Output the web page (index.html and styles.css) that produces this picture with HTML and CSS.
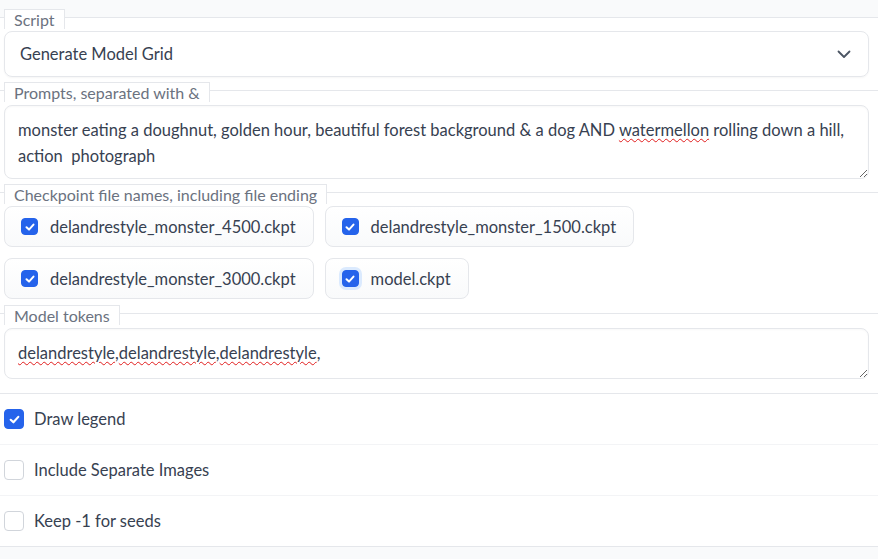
FILE: index.html
```html
<!DOCTYPE html>
<html lang="en">
<head>
  <meta charset="UTF-8">
  <meta name="viewport" content="width=device-width, initial-scale=1.0">
  <title>Generate Model Grid</title>
  <link rel="stylesheet" href="styles.css">
</head>
<body>
  <div class="top-gap"></div>

  <div class="panel">
    <div class="block">
      <span class="block-label">Script</span>
      <div class="select">
        <span>Generate Model Grid</span>
        <svg class="chevron" width="14" height="9" viewBox="0 0 14 9"><path d="M1.5 1.5 L7 7 L12.5 1.5" fill="none" stroke="#4b5563" stroke-width="1.8" stroke-linecap="round" stroke-linejoin="round"/></svg>
      </div>
    </div>

    <div class="block">
      <span class="block-label">Prompts, separated with &amp;</span>
      <div class="textbox textbox-tall">monster eating a doughnut, golden hour, beautiful forest background &amp; a dog AND <span class="typo">watermellon</span> rolling down a hill, action&nbsp; photograph</div>
    </div>

    <div class="block block-roomy">
      <span class="block-label">Checkpoint file names, including file ending</span>
      <div class="pill-list">
        <label class="pill"><span class="box checked"><svg width="12" height="12" viewBox="0 0 12 12"><path d="M2.5 6.3 L5 8.6 L9.5 3.6" fill="none" stroke="#fff" stroke-width="2" stroke-linecap="round" stroke-linejoin="round"/></svg></span>delandrestyle_monster_4500.ckpt</label>
        <label class="pill"><span class="box checked"><svg width="12" height="12" viewBox="0 0 12 12"><path d="M2.5 6.3 L5 8.6 L9.5 3.6" fill="none" stroke="#fff" stroke-width="2" stroke-linecap="round" stroke-linejoin="round"/></svg></span>delandrestyle_monster_1500.ckpt</label>
        <label class="pill"><span class="box checked"><svg width="12" height="12" viewBox="0 0 12 12"><path d="M2.5 6.3 L5 8.6 L9.5 3.6" fill="none" stroke="#fff" stroke-width="2" stroke-linecap="round" stroke-linejoin="round"/></svg></span>delandrestyle_monster_3000.ckpt</label>
        <label class="pill"><span class="box checked focused"><svg width="12" height="12" viewBox="0 0 12 12"><path d="M2.5 6.3 L5 8.6 L9.5 3.6" fill="none" stroke="#fff" stroke-width="2" stroke-linecap="round" stroke-linejoin="round"/></svg></span>model.ckpt</label>
      </div>
    </div>

    <div class="block block-roomy">
      <span class="block-label">Model tokens</span>
      <div class="textbox textbox-short"><span class="typo">delandrestyle</span>,<span class="typo">delandrestyle</span>,<span class="typo">delandrestyle</span>,</div>
    </div>

    <div class="check-rows">
      <label class="check-row"><span class="box big checked"><svg width="13" height="13" viewBox="0 0 12 12"><path d="M2.5 6.3 L5 8.6 L9.5 3.6" fill="none" stroke="#fff" stroke-width="2" stroke-linecap="round" stroke-linejoin="round"/></svg></span>Draw legend</label>
      <label class="check-row"><span class="box big"></span>Include Separate Images</label>
      <label class="check-row"><span class="box big"></span>Keep -1 for seeds</label>
    </div>
  </div>
</body>
</html>
```

FILE: styles.css
```css
* {
  box-sizing: border-box;
}

body {
  margin: 0;
  font-family: "Lato", "Noto Sans", sans-serif;
  font-size: 16.5px;
  color: #374151;
  background-color: #f9fafb;
}

.top-gap {
  height: 17px;
}

.panel {
  background-color: #ffffff;
  border-top: 1px solid #e5e7eb;
  border-bottom: 1px solid #e5e7eb;
}

/* labelled form blocks */
.block {
  padding: 0 9px 13px 4px;
  border-bottom: 1px solid #e5e7eb;
}

.block-roomy {
  padding-bottom: 14px;
}

.block-label {
  display: block;
  width: fit-content;
  margin-top: -9px;
  height: 20px;
  line-height: 19px;
  padding: 0 9px;
  font-size: 16px;
  color: #6b7280;
  background-color: #ffffff;
  border: 1px solid #e5e7eb;
  border-bottom: none;
}

.select {
  display: flex;
  align-items: center;
  justify-content: space-between;
  margin-top: 2px;
  height: 46px;
  padding: 0 17px 0 15px;
  border: 1px solid #e5e7eb;
  border-radius: 8px;
  box-shadow: 0 1px 2px rgba(0, 0, 0, 0.04);
}

.textbox {
  margin-top: 3px;
  padding: 11px 13px;
  line-height: 26px;
  border: 1px solid #e5e7eb;
  border-radius: 8px;
  box-shadow: inset 0 1px 2px rgba(0, 0, 0, 0.03);
  resize: vertical;
  overflow: hidden;
}

.textbox-tall {
  height: 74px;
}

.textbox-short {
  height: 51px;
  padding-top: 11px;
}

.typo {
  text-decoration: underline wavy #e11d1d;
  text-decoration-thickness: 1px;
  text-underline-offset: 2px;
}

/* checkbox group */
.pill-list {
  display: flex;
  flex-wrap: wrap;
  gap: 11px;
  margin-top: 2px;
}

.pill {
  display: flex;
  align-items: center;
  gap: 12px;
  height: 41px;
  padding: 0 17px 0 16px;
  border: 1px solid #e5e7eb;
  border-radius: 8px;
  background: linear-gradient(to top, #f9fafb, #ffffff);
}

.box {
  display: inline-flex;
  align-items: center;
  justify-content: center;
  width: 17px;
  height: 17px;
  border: 1px solid #d1d5db;
  border-radius: 4px;
  background-color: #ffffff;
  flex-shrink: 0;
}

.box.checked {
  background-color: #2563eb;
  border-color: #2563eb;
}

.box.focused {
  box-shadow: 0 0 0 3px #dbeafe;
}

.box.big {
  width: 20px;
  height: 20px;
}

/* plain checkbox rows */
.check-row {
  display: flex;
  align-items: center;
  gap: 10px;
  height: 51px;
  padding: 0 4px;
  border-bottom: 1px solid #f3f4f6;
}

.check-row:last-child {
  height: 50px;
  border-bottom: none;
}
```
